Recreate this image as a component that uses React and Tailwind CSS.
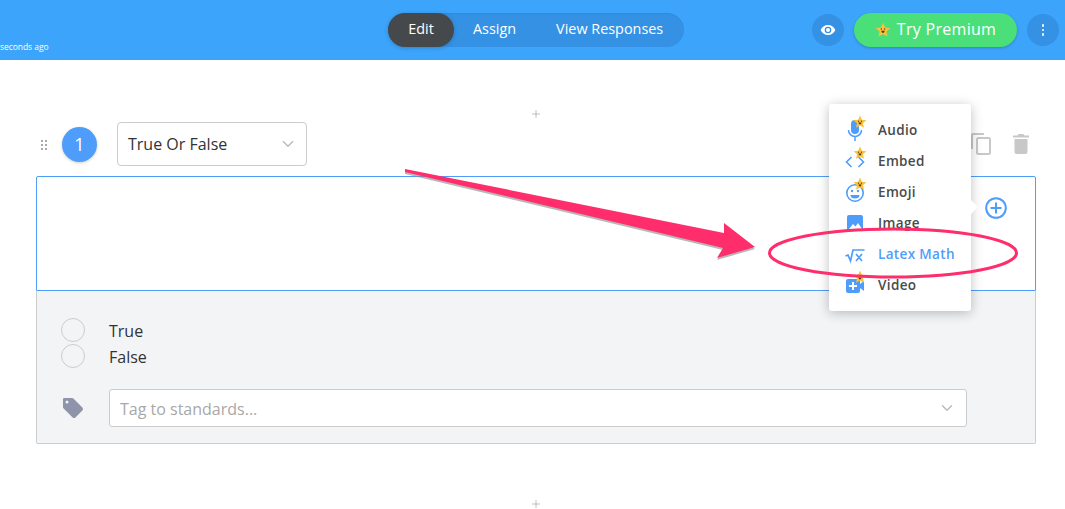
import { ChevronDown, Plus } from 'lucide-react';

function Star({ className }) {
  return (
    <svg viewBox="0 0 24 24" className={className}>
      <path d="M12 1l3.2 7.1 7.8.8-5.9 5.2 1.7 7.7L12 18l-6.8 3.8 1.7-7.7L1 8.9l7.8-.8z" fill="#fbc13a" />
      <circle cx="9.5" cy="10.5" r="1" fill="#4a3520" />
      <circle cx="14.5" cy="10.5" r="1" fill="#4a3520" />
      <path d="M9.5 13h5l-1 3h-3z" fill="#4a3520" />
    </svg>
  );
}

const iconBlue = '#4f9dfb';

function AudioIcon() {
  return (
    <svg viewBox="0 0 20 24" className="w-[20px] h-[24px]" fill="none">
      <rect x="6" y="2" width="8" height="14" rx="4" fill={iconBlue} />
      <path d="M3.5 12a6.5 6.5 0 0 0 13 0M10 19v4" stroke={iconBlue} strokeWidth="1.5" />
    </svg>
  );
}

function EmbedIcon() {
  return (
    <svg viewBox="0 0 20 24" className="w-[20px] h-[24px]" fill="none">
      <path d="M6.5 8L1.5 13l5 5M13.5 8l5 5-5 5" stroke={iconBlue} strokeWidth="1.6" />
    </svg>
  );
}

function EmojiIcon() {
  return (
    <svg viewBox="0 0 20 24" className="w-[20px] h-[24px]" fill="none">
      <circle cx="10" cy="13" r="8.2" stroke={iconBlue} strokeWidth="1.6" />
      <circle cx="7" cy="11" r="1.2" fill={iconBlue} />
      <circle cx="13" cy="11" r="1.2" fill={iconBlue} />
      <path d="M5.5 15h9a4.5 3.5 0 0 1-9 0z" fill={iconBlue} />
    </svg>
  );
}

function ImageIcon() {
  return (
    <svg viewBox="0 0 20 24" className="w-[20px] h-[24px]">
      <path d="M4 4h12a2 2 0 0 1 2 2v13a1 1 0 0 1-1 1H3a1 1 0 0 1-1-1V6a2 2 0 0 1 2-2z" fill={iconBlue} />
      <path d="M4 18l4-5 2.5 2.5L13 12l4 6z" fill="#fff" />
    </svg>
  );
}

function MathIcon() {
  return (
    <svg viewBox="0 0 20 24" className="w-[20px] h-[24px]" fill="none">
      <path d="M0.5 14l2.5-1 2.5 6L8 8h11.5M11 12l6 7M17 12l-6 7" stroke={iconBlue} strokeWidth="1.7" />
    </svg>
  );
}

function VideoIcon() {
  return (
    <svg viewBox="0 0 20 24" className="w-[20px] h-[24px]">
      <rect x="1" y="6" width="14" height="14" rx="2" fill={iconBlue} />
      <path d="M15 11l4-3v10l-4-3z" fill={iconBlue} />
      <path d="M8 9v8M4 13h8" stroke="#fff" strokeWidth="2" />
    </svg>
  );
}

const menuItems = [
  { label: 'Audio', Icon: AudioIcon, premium: true },
  { label: 'Embed', Icon: EmbedIcon, premium: true },
  { label: 'Emoji', Icon: EmojiIcon, premium: true },
  { label: 'Image', Icon: ImageIcon },
  { label: 'Latex Math', Icon: MathIcon, active: true },
  { label: 'Video', Icon: VideoIcon, premium: true },
];

function InsertMenu() {
  return (
    <div className="absolute left-[829px] top-[104px] w-[142px] h-[207px] bg-white rounded-[3px] shadow-[0_2px_12px_rgba(0,0,0,0.25)] pt-[10px] pl-[16px]">
      {menuItems.map(({ label, Icon, premium, active }) => (
        <div key={label} className="h-[31px] flex items-center gap-[13px]">
          <div className="relative w-[20px] h-[24px] shrink-0">
            <Icon />
            {premium && <Star className="absolute left-[8px] -top-[3px] w-[14px] h-[14px]" />}
          </div>
          <span className={`mt-[1px] text-[13.5px] font-semibold tracking-[0.35px] ${active ? 'text-[#4f9dfb]' : 'text-[#4a4a4a]'}`}>{label}</span>
        </div>
      ))}
      {/* little arrow pointing at the plus button */}
      <div className="absolute -right-[5px] top-[98px] w-[10px] h-[10px] bg-white rotate-45" />
    </div>
  );
}

function Annotation() {
  return (
    <svg className="absolute left-0 top-0 pointer-events-none" width="1065" height="509" viewBox="0 0 1065 509" fill="none">
      <path d="M405 169 L724 233 L724 223 L755 247 L717 258 L723 248 L405 172 Z" fill="#888" transform="translate(0 2)" opacity="0.6" />
      <path d="M405 169 L724 233 L724 223 L755 247 L717 258 L723 248 L405 172 Z" fill="#ff2d6b" />
      <ellipse cx="893" cy="253" rx="123.5" ry="24" stroke="#ff2d6b" strokeWidth="3" />
    </svg>
  );
}

export default function App() {
  return (
    <div className="relative h-[509px] w-[1065px] overflow-hidden bg-white font-['Open_Sans',sans-serif] text-[#444]">
      {/* Top bar */}
      <div className="h-[60px] bg-[#3ca4fb] flex items-center">
        <div className="w-[388px] h-full pt-[41px] text-[8.5px] leading-[12px] text-white tracking-[-0.05px]">seconds ago</div>
        <div className="h-[34px] w-[296px] rounded-full bg-[#3591e4] flex items-center pb-[2px] text-[14.4px] font-medium text-white shadow-[inset_0_1px_1px_rgba(0,0,0,0.05)]">
          <div className="w-[66px] h-[34px] -mb-[2px] pb-[2px] rounded-full bg-[#46494c] flex items-center justify-center shadow-[0_1px_4px_rgba(0,0,0,0.2)]">Edit</div>
          <div className="ml-[19px]">Assign</div>
          <div className="ml-[40px]">View Responses</div>
        </div>
        <div className="flex-1 flex items-center justify-end pr-[6px]">
          <div className="w-[32px] h-[32px] rounded-full bg-[#3591e4] flex items-center justify-center">
            <svg viewBox="0 0 24 24" className="w-[16px] h-[16px]" fill="#fff">
              <path d="M12 4.5C7 4.5 2.7 7.6 1 12c1.7 4.4 6 7.5 11 7.5s9.3-3.1 11-7.5c-1.7-4.4-6-7.5-11-7.5zM12 17a5 5 0 1 1 0-10 5 5 0 0 1 0 10zm0-8a3 3 0 1 0 0 6 3 3 0 0 0 0-6z" />
            </svg>
          </div>
          <div className="ml-[10px] w-[163px] h-[34px] pb-[2px] rounded-full bg-[#4adf78] flex items-center justify-center gap-[6px] text-white text-[16px] font-medium tracking-[0.3px] shadow-[0_1px_3px_rgba(0,0,0,0.2)]">
            <Star className="w-[16px] h-[16px] mt-[2px]" />
            Try Premium
          </div>
          <div className="ml-[10px] w-[32px] h-[32px] rounded-full bg-[#3591e4] flex flex-col items-center justify-center gap-[2px]">
            <span className="w-[2.5px] h-[2.5px] rounded-full bg-white" />
            <span className="w-[2.5px] h-[2.5px] rounded-full bg-white" />
            <span className="w-[2.5px] h-[2.5px] rounded-full bg-white" />
          </div>
        </div>
      </div>

      {/* Question */}
      <div className="pl-[36px] w-[1036px]">
        <div className="h-[62px] flex items-start justify-center pt-[48px]">
          <Plus className="w-[12px] h-[12px] text-[#aaa]" strokeWidth={1.5} />
        </div>
        <div className="h-[54px] flex items-end pb-[10px]">
          <div className="ml-[5px] mb-[16px] grid grid-cols-2 gap-[2px] w-[6px] shrink-0">
            {[0, 1, 2, 3, 4, 5].map((i) => (
              <span key={i} className="w-[2px] h-[2px] bg-[#aaa]" />
            ))}
          </div>
          <div className="ml-[15px] mb-[4px] w-[35px] h-[35px] rounded-full bg-[#4f9dfb] text-white text-[18px] flex items-center justify-center shadow-[0_1px_3px_rgba(0,0,0,0.2)]">1</div>
          <div className="ml-[20px] w-[190px] h-[44px] border border-[#ccc] rounded-[4px] bg-white flex items-center justify-between pl-[10px] pr-[9px] text-[16px] text-[#333]">
            True Or False
            <ChevronDown className="w-[18px] h-[18px] text-[#bbb]" />
          </div>
          <div className="ml-auto flex items-center mb-[11px]">
            <svg viewBox="0 0 20 22" className="w-[20px] h-[22px]" fill="none" stroke="#c8c8c8" strokeWidth="2">
              <path d="M1 16V2a1 1 0 0 1 1-1h11" />
              <rect x="6" y="5" width="13" height="16" rx="1.5" />
            </svg>
            <svg viewBox="0 0 16 20" className="ml-[22px] mr-[7px] w-[16px] h-[20px]" fill="#c8c8c8">
              <path d="M5.5 0h5l1 1.5H16v2H0v-2h4.5zM1.5 5h13v13a2 2 0 0 1-2 2h-9a2 2 0 0 1-2-2z" />
            </svg>
          </div>
        </div>

        <div className="h-[115px] border border-[#4f9dfb] rounded-t-[2px] flex items-start justify-end pt-[20px] pr-[28px]">
          <svg viewBox="0 0 22 22" className="w-[22px] h-[22px]" fill="none" stroke="#4f9dfb" strokeWidth="2">
            <circle cx="11" cy="11" r="9.8" />
            <path d="M11 5.5v11M5.5 11h11" />
          </svg>
        </div>

        <div className="h-[153px] bg-[#f3f4f6] border border-t-0 border-[#ccc] rounded-b-[2px] pt-[26px] pl-[24px] text-[16px] text-[#333]">
          <div className="h-[26px] flex items-center">
            <span className="w-[24px] h-[24px] rounded-full border border-[#ccc]" />
            <span className="ml-[24px] mt-[1px]">True</span>
          </div>
          <div className="h-[26px] flex items-center">
            <span className="w-[24px] h-[24px] rounded-full border border-[#ccc]" />
            <span className="ml-[24px] mt-[1px]">False</span>
          </div>
          <div className="mt-[20px] flex items-center">
            <svg viewBox="0 0 22 22" className="ml-[1px] w-[22px] h-[22px]" fill="#8f94ab">
              <path d="M2 1h8a2 2 0 0 1 1.4.6l9 9a2 2 0 0 1 0 2.8l-7 7a2 2 0 0 1-2.8 0l-9-9A2 2 0 0 1 1 10V2a1 1 0 0 1 1-1zm3 2.5a1.5 1.5 0 1 0 0 3 1.5 1.5 0 0 0 0-3z" />
            </svg>
            <div className="ml-[25px] w-[858px] h-[38px] bg-white border border-[#ccc] rounded-[3px] flex items-center justify-between pl-[10px] pr-[10px] text-[16px] text-[#a8a8a8]">
              <span className="mt-[1px]">Tag to standards...</span>
              <ChevronDown className="w-[18px] h-[18px] text-[#bbb]" />
            </div>
          </div>
        </div>

        <div className="h-[60px] flex items-start justify-center pt-[54px]">
          <Plus className="w-[12px] h-[12px] text-[#aaa]" strokeWidth={1.5} />
        </div>
      </div>

      <InsertMenu />
      <Annotation />
    </div>
  );
}
